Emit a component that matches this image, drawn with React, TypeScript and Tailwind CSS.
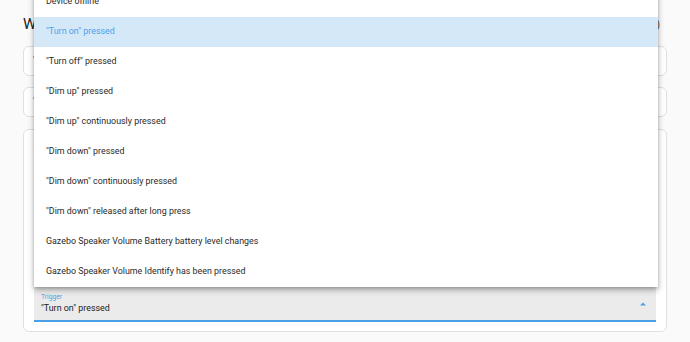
const options = [
  "Device offline",
  '"Turn on" pressed',
  '"Turn off" pressed',
  '"Dim up" pressed',
  '"Dim up" continuously pressed',
  '"Dim down" pressed',
  '"Dim down" continuously pressed',
  '"Dim down" released after long press',
  "Gazebo Speaker Volume Battery battery level changes",
  "Gazebo Speaker Volume Identify has been pressed",
];

export default function App() {
  const selected = 1;

  return (
    <div className="relative h-[342px] overflow-hidden bg-[#fafafa] px-[23px] font-['Roboto',sans-serif] text-[#212121]">
      {/* Header row */}
      <div className="flex h-[46px] items-center justify-between pt-[3px]">
        <h2 className="text-[15px] font-normal leading-none">When</h2>
        <span className="mr-[7px] text-[10px] text-[#444]">(?)</span>
      </div>

      {/* Cards */}
      <div className="flex flex-col gap-[11px]">
        <div className="flex h-[30px] items-center rounded-[6px] border border-[#e0e0e0] bg-white px-[9px] text-[9px]">
          "Dim up" pressed
        </div>
        <div className="flex h-[30px] items-center rounded-[6px] border border-[#e0e0e0] bg-white px-[9px] text-[9px]">
          "Dim down" pressed
        </div>
        <div className="mt-[1px] flex h-[203px] flex-col justify-between rounded-[6px] border border-[#e0e0e0] bg-white px-[10px] pb-[9px] pt-[14px]">
          <div className="text-[9px]">"Turn on" pressed</div>
          <div className="relative h-[36px] rounded-t-[3px] border-b-2 border-[#4a9fe5] bg-[#ebebeb] px-[7px] pt-[7px]">
            <div className="text-[6.7px] leading-[9px] text-[#4a9fe5]">Trigger</div>
            <div className="text-[8.9px] leading-[13px] text-[#212121]">"Turn on" pressed</div>
            <svg
              className="absolute right-[8px] top-[15px]"
              width="10"
              height="6"
              viewBox="0 0 10 6"
            >
              <path d="M2 4.5 L5 1.5 L8 4.5 Z" fill="#4a9fe5" />
            </svg>
          </div>
        </div>
        <div className="mt-[-1px] h-[20px] w-[89px] rounded-[4px] border border-[#e0e0e0] bg-white" />
      </div>

      {/* Open dropdown menu */}
      <div className="absolute left-[34px] top-[-13px] w-[624px] bg-white shadow-[0_3px_6px_rgba(0,0,0,0.3),0_1px_3px_rgba(0,0,0,0.15)]">
        {options.map((opt, i) => (
          <div
            key={opt}
            className={
              i === selected
                ? "flex h-[30px] items-center bg-[#d4e8f8] px-[12px] text-[8.9px] text-[#4aa3e8]"
                : "flex h-[30px] items-center px-[12px] text-[8.9px] text-[#2a2a2a]"
            }
          >
            {opt}
          </div>
        ))}
      </div>
    </div>
  );
}
